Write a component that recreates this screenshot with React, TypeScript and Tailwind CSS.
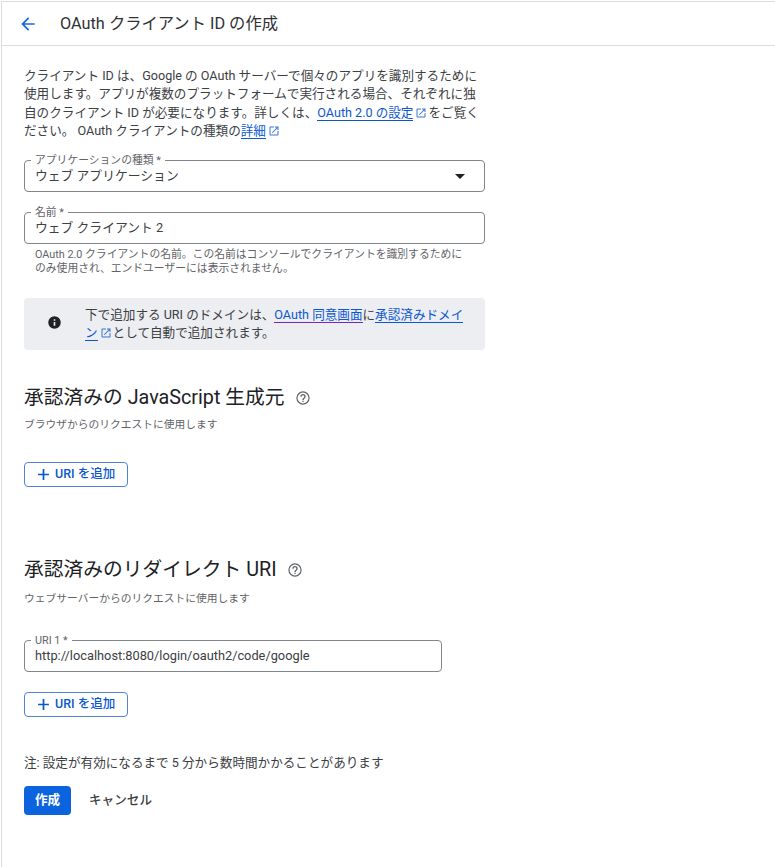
const font = { fontFamily: '"Roboto", "Noto Sans CJK JP", sans-serif' };

function Ext() {
  return (
    <svg viewBox="0 0 24 24" className="inline-block w-[12px] h-[12px] ml-[2px] mr-[1px] align-[-2px]" fill="#0b57d0" style={{ opacity: 0.8 }}>
      <path d="M19 19H5V5h7V3H5a2 2 0 0 0-2 2v14a2 2 0 0 0 2 2h14a2 2 0 0 0 2-2v-7h-2v7zM14 3v2h3.59l-9.83 9.83 1.41 1.41L19 6.41V10h2V3h-7z" />
    </svg>
  );
}

function Help() {
  return (
    <svg viewBox="0 0 24 24" className="w-[16px] h-[16px]" fill="#5f6368">
      <path d="M12 2a10 10 0 1 0 0 20 10 10 0 0 0 0-20zm0 18.2a8.2 8.2 0 1 1 0-16.4 8.2 8.2 0 0 1 0 16.4zM11 16h2v2h-2v-2zm1-10a4 4 0 0 0-4 4h2a2 2 0 1 1 4 0c0 2-3 1.75-3 5h2c0-2.25 3-2.5 3-5a4 4 0 0 0-4-4z" />
    </svg>
  );
}

function Field({ label, value, width, arrow }: { label: string; value: string; width: string; arrow?: boolean }) {
  return (
    <div className={`relative h-[32px] rounded-[4px] border border-[#80868b] flex items-center pl-[10px] pr-[19px] ${width}`}>
      <span className="absolute left-[6px] top-[-6px] bg-white px-[4px] text-[10.8px] leading-[12px] text-[#5f6368]">{label}</span>
      <span className="text-[12.8px] leading-[16px] text-[#3c4043] flex-1">{value}</span>
      {arrow && <span className="w-0 h-0 mt-[1px] border-l-[5px] border-r-[5px] border-t-[5px] border-l-transparent border-r-transparent border-t-[#202124]" />}
    </div>
  );
}

function AddButton() {
  return (
    <button className="h-[25px] w-[104px] rounded-[4px] border border-[#4f83d9] flex items-center pl-[12px] gap-[5px] text-[#0b57d0] text-[12.5px] font-medium">
      <svg viewBox="0 0 12 12" className="w-[13px] h-[13px]" fill="#0b57d0">
        <path d="M5.2 1h1.6v4.2H11v1.6H6.8V11H5.2V6.8H1V5.2h4.2z" />
      </svg>
      URI を追加
    </button>
  );
}

export default function App() {
  return (
    <div className="pl-px pt-px bg-white" style={font}>
      <div className="min-h-[866px] border-l border-t border-[#dadce0] text-[#3c4043]">
        <header className="h-[44px] border-b border-[#dadce0] flex items-center pl-[17px]">
          <svg viewBox="0 0 24 24" className="w-[20px] h-[20px] -ml-[1px]" fill="#1a66d6">
            <path d="M20 11H7.83l5.59-5.59L12 4l-8 8 8 8 1.41-1.41L7.83 13H20v-2z" />
          </svg>
          <h1 className="ml-[22px] text-[16.3px] leading-[22px] text-[#303134]">OAuth クライアント ID の作成</h1>
        </header>

        <main className="pl-[22px] pt-[21px] w-[483px]">
          <p className="text-[12.6px] leading-[18.4px] w-[456px]">
            クライアント ID は、Google の OAuth サーバーで個々のアプリを識別するために使用します。アプリが複数のプラットフォームで実行される場合、それぞれに独自のクライアント ID が必要になります。詳しくは、
            <a className="text-[#0b57d0] border-b border-[#0b57d0]">OAuth 2.0 の設定</a>
            <Ext />をご覧ください。 OAuth クライアントの種類の
            <a className="text-[#0b57d0] border-b border-[#0b57d0]">詳細</a>
            <Ext />
          </p>

          <div className="mt-[19px]">
            <Field label="アプリケーションの種類 *" value="ウェブ アプリケーション" width="w-[461px]" arrow />
          </div>
          <div className="mt-[20px]">
            <Field label="名前 *" value="ウェブ クライアント 2" width="w-[461px]" />
            <p className="mt-[4px] pl-[11px] pr-[22px] text-[10.8px] leading-[14.5px] text-[#5f6368]">
              OAuth 2.0 クライアントの名前。この名前はコンソールでクライアントを識別するためにのみ使用され、エンドユーザーには表示されません。
            </p>
          </div>

          <div className="mt-[21px] h-[52px] w-[461px] rounded-[4px] bg-[#eceef2] flex items-center pl-[23px] pr-[20px]">
            <svg viewBox="0 0 24 24" className="w-[15px] h-[15px] shrink-0 -mt-[3px]" fill="#202124">
              <path d="M12 2a10 10 0 1 0 0 20 10 10 0 0 0 0-20zm1.3 15h-2.6v-6h2.6v6zm0-8h-2.6V6.6h2.6V9z" />
            </svg>
            <p className="ml-[23px] pt-[1px] text-[12.6px] leading-[18.4px] text-[#3c4043]">
              下で追加する URI のドメインは、
              <a className="text-[#0b57d0] border-b border-[#7627bb]">OAuth 同意画面</a>
              に
              <a className="text-[#0b57d0] border-b border-[#0b57d0]">承認済みドメイン</a>
              <Ext />として自動で追加されます。
            </p>
          </div>

          <section className="mt-[33px]">
            <h2 className="flex items-center gap-[10px] text-[19.75px] leading-[30px] text-[#202124]">
              承認済みの JavaScript 生成元 <Help />
            </h2>
            <p className="mt-[5px] text-[10.75px] leading-[14px] text-[#5f6368]">ブラウザからのリクエストに使用します</p>
            <div className="mt-[30px]">
              <AddButton />
            </div>
          </section>

          <section className="mt-[68px]">
            <h2 className="flex items-center gap-[10px] text-[19.75px] leading-[30px] text-[#202124]">
              承認済みのリダイレクト URI <Help />
            </h2>
            <p className="mt-[7px] text-[10.75px] leading-[14px] text-[#5f6368]">ウェブサーバーからのリクエストに使用します</p>
            <div className="mt-[34px]">
              <Field label="URI 1 *" value="http://localhost:8080/login/oauth2/code/google" width="w-[418px]" />
            </div>
            <div className="mt-[20px]">
              <AddButton />
            </div>
          </section>

          <p className="mt-[37px] text-[12.6px] leading-[18px]">注: 設定が有効になるまで 5 分から数時間かかることがあります</p>

          <div className="mt-[14px] flex items-center gap-[18px]">
            <button className="h-[29px] w-[47px] rounded-[4px] bg-[#0b63de] text-white text-[12.6px] font-bold">作成</button>
            <button className="text-[12.6px] font-medium text-[#3c4043]">キャンセル</button>
          </div>
        </main>
      </div>
    </div>
  );
}
